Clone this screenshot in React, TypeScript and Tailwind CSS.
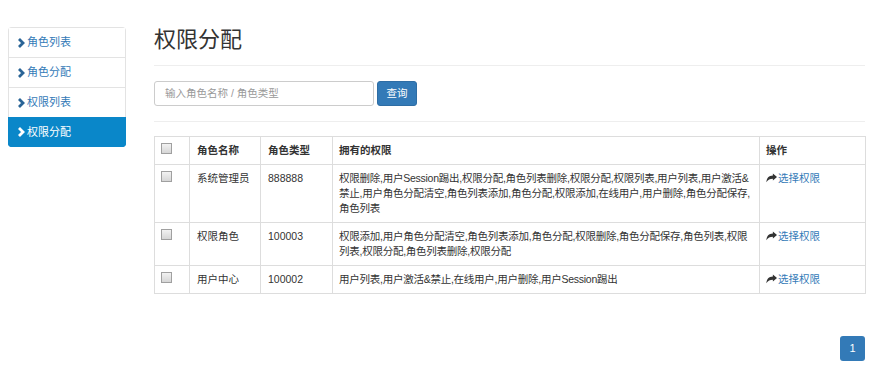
import React from 'react'

const MENU = [
  { label: '角色列表', active: false },
  { label: '角色分配', active: false },
  { label: '权限列表', active: false },
  { label: '权限分配', active: true },
]

const ROWS = [
  {
    nome: '系统管理员',
    tipo: '888888',
    perms:
      '权限删除,用户Session踢出,权限分配,角色列表删除,权限分配,权限列表,用户列表,用户激活&禁止,用户角色分配清空,角色列表添加,角色分配,权限添加,在线用户,用户删除,角色分配保存,角色列表',
  },
  {
    nome: '权限角色',
    tipo: '100003',
    perms: '权限添加,用户角色分配清空,角色列表添加,角色分配,权限删除,角色分配保存,角色列表,权限列表,权限分配,角色列表删除,权限分配',
  },
  {
    nome: '用户中心',
    tipo: '100002',
    perms: '用户列表,用户激活&禁止,在线用户,用户删除,用户Session踢出',
  },
]

function Chevron() {
  return (
    <svg width="8" height="10" viewBox="0 0 8 10" className="mr-[2px] shrink-0">
      <polyline points="2,1 6,5 2,9" fill="none" stroke="currentColor" strokeWidth="2.8" strokeLinejoin="miter" />
    </svg>
  )
}

function ShareIcon() {
  return (
    <svg width="11" height="10" viewBox="0 0 16 14" className="mr-[1px] inline-block align-[-1px]">
      <path d="M16 5.5 L10 0.5 V3.5 C4 3.5 1 7.5 0.5 13 C2.5 9.5 6 8 10 8 V10.5 Z" fill="#333" />
    </svg>
  )
}

function Check() {
  return <span className="inline-block w-[11px] h-[11px] border border-[#a0a0a0] bg-gradient-to-b from-[#f2f2f2] to-[#d6d6d6]" />
}

export default function App() {
  return (
    <div
      className="w-[870px] h-[369px] bg-white text-[#333] text-[12px] flex overflow-hidden"
      style={{ fontFamily: '"Liberation Sans", "Noto Sans CJK SC", sans-serif' }}
    >
      {/* Sidebar */}
      <div className="pl-[8px] pt-[27px] w-[154px] shrink-0">
        <div className="w-[118px] rounded-[4px] overflow-hidden text-[11px]">
          {MENU.map((m, i) => (
            <div
              key={m.label}
              className={`h-[30px] flex items-center pl-[8px] border-x border-t ${i === MENU.length - 1 ? 'border-b' : ''} ${
                m.active ? 'bg-[#0a87c9] border-[#0a87c9] text-white' : 'border-[#e3e3e3] text-[#337ab7]'
              }`}
            >
              <span className={m.active ? 'text-white' : 'text-[#2a6496]'}>
                <Chevron />
              </span>
              <span>{m.label}</span>
            </div>
          ))}
        </div>
      </div>

      {/* Main */}
      <div className="w-[711px] shrink-0 flex flex-col">
        <h1 className="text-[22px] leading-[28px] mt-[26px] font-normal text-[#333]">权限分配</h1>
        <div className="h-px bg-[#eee] mt-[11px]" />
        <div className="flex items-center gap-[3px] mt-[15px]">
          <div className="w-[220px] h-[25px] border border-[#ccc] rounded-[3px] flex items-center px-[10px] text-[#999] text-[10.5px]">
            输入角色名称 / 角色类型
          </div>
          <button className="w-[40px] h-[25px] bg-[#337ab7] border border-[#2e6da4] rounded-[3px] text-white text-[10.5px]">
            查询
          </button>
        </div>
        <div className="h-px bg-[#eee] mt-[15px]" />

        <table className="mt-[14px] w-[711px] table-fixed border-collapse border border-[#ddd] text-[10.5px] leading-[15px]">
          <colgroup>
            <col className="w-[35px]" />
            <col className="w-[71px]" />
            <col className="w-[72px]" />
            <col className="w-[427px]" />
            <col className="w-[106px]" />
          </colgroup>
          <thead>
            <tr className="text-left">
              <th className="border border-[#ddd] px-[6px] py-[6px] align-middle">
                <Check />
              </th>
              <th className="border border-[#ddd] px-[7px] py-[6px] font-bold">角色名称</th>
              <th className="border border-[#ddd] px-[7px] py-[6px] font-bold">角色类型</th>
              <th className="border border-[#ddd] px-[6px] py-[6px] font-bold">拥有的权限</th>
              <th className="border border-[#ddd] px-[6px] py-[6px] font-bold">操作</th>
            </tr>
          </thead>
          <tbody>
            {ROWS.map(r => (
              <tr key={r.tipo}>
                <td className="border border-[#ddd] px-[6px] py-[6px] align-top">
                  <Check />
                </td>
                <td className="border border-[#ddd] px-[7px] py-[6px] align-top whitespace-nowrap">{r.nome}</td>
                <td className="border border-[#ddd] px-[7px] py-[6px] align-top">{r.tipo}</td>
                <td className="border border-[#ddd] px-[6px] py-[6px] align-top break-all tracking-[-0.25px]">{r.perms}</td>
                <td className="border border-[#ddd] px-[6px] py-[6px] align-top">
                  <ShareIcon />
                  <span className="text-[#337ab7]">选择权限</span>
                </td>
              </tr>
            ))}
          </tbody>
        </table>

        <div className="flex justify-end mt-[42px]">
          <div className="w-[25px] h-[25px] rounded-[3px] bg-[#337ab7] text-white text-[11px] flex items-center justify-center">
            1
          </div>
        </div>
      </div>
    </div>
  )
}
